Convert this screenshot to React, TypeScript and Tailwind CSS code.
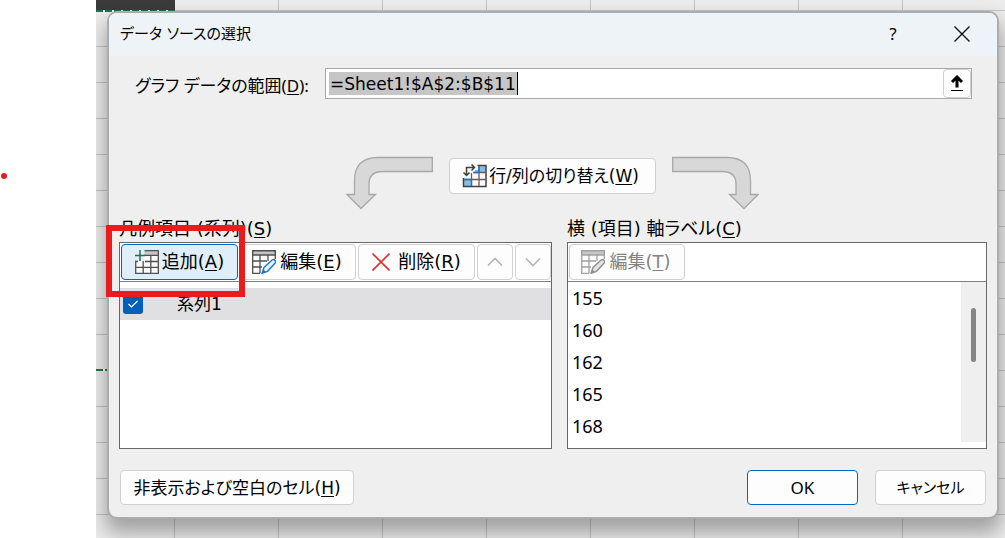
import type { ReactNode } from "react";

const button =
  "flex shrink-0 items-center justify-center rounded border border-[#d0d0d0] bg-[#fdfdfd] whitespace-nowrap";

function Key({ children }: { children: string }) {
  return (
    <>
      (<span className="underline decoration-1 underline-offset-2">{children}</span>)
    </>
  );
}

function TableIcon({ kind, muted = false }: { kind: "add" | "edit"; muted?: boolean }) {
  const line = muted ? "#a0a0a0" : "#505050";
  const head = muted ? "#c8c8c8" : "#c4c4c4";
  const pen = muted ? "#8f8f8f" : "#1e78c8";
  return (
    <svg width="24" height="24" viewBox="0 0 24 24" fill="none" className="shrink-0" aria-hidden="true">
      {kind === "add" ? (
        <>
          <path d="M.7 11H8.500V5.500H23.300V23.300H.7Z" fill="#fafafa" />
          <path d="M9.500 .7H23.300V5H9.500Z" fill={head} />
          <path
            d="M9.500 .7H23.300V23.300H.7V10.500M9.500 5.300H23.300M10 11.500H23.300M.7 11.500H3M.7 17.300H23.300M8.200 11V23.300M15.800 5.300V23.300"
            stroke={line}
            strokeWidth="1.300"
          />
          <path d="M5 0V11M0 5.500H10.500" stroke="#217346" strokeWidth="1.500" />
        </>
      ) : (
        <>
          <path d="M.7 .7H23.300V5H.7Z" fill={head} stroke={line} strokeWidth="1.400" />
          <path
            d="M.7 5V23.300H8M.7 11H15M.7 17H10M8 5V23.300M16 5V11M23.300 5V9"
            stroke={line}
            strokeWidth="1.300"
          />
          <path
            d="M10 23.300L12 17.500L20.300 9.800Q22 9 23.200 10.500Q24 12 23 13.200L15.500 21.300Z"
            fill={muted ? "#e4e4e4" : "#e3f1fc"}
            stroke={pen}
            strokeWidth="1.400"
          />
          <path d="M11.500 19.500L13.800 21.800L10 23.300Z" fill={pen} />
        </>
      )}
    </svg>
  );
}

function SwitchIcon() {
  return (
    <svg width="25" height="24" viewBox="0 0 25 24" fill="none" className="shrink-0" aria-hidden="true">
      <path d="M17 2H24V8.500H13V6H17Z" fill="#83beec" />
      <path d="M2 15H9V22H2Z" fill="#83beec" />
      <path d="M15.500 1.500H24V22.500H1.500V14" stroke="#404040" strokeWidth="1.500" />
      <path d="M11 8.500H24M2 15.500H24M9.500 9V22M17 2V22" stroke="#606060" strokeWidth="1.300" />
      <path d="M12 8.500H17V2M2 15.500H9.500V22" stroke="#1e78c8" strokeWidth="1.300" />
      <path
        d="M4.500 11V3.500H12.500M9.500 .5L12.500 3.500L9.500 6.500M1.500 8.500L4.500 11.500L7.500 8.500"
        stroke="#404040"
        strokeWidth="1.500"
      />
    </svg>
  );
}

function CurvedArrow({ flip = false }: { flip?: boolean }) {
  return (
    <svg width="87" height="54" viewBox="0 0 87 54" className="shrink-0" aria-hidden="true">
      <path
        transform={flip ? "matrix(-1 0 0 1 87 0)" : undefined}
        d="M86.300 1.500V15.500H37Q23 15.500 23 28V38.500H29.500L15 52.500L1 38.500H8.500V25Q8.500 1.500 32 1.500Z"
        fill="#d8d8d8"
        stroke="#a8a8a8"
        strokeWidth="1.300"
      />
    </svg>
  );
}

function Chevron({ down = false }: { down?: boolean }) {
  return (
    <svg width="16" height="10" viewBox="0 0 16 10" fill="none" stroke="#b4b4b4" strokeWidth="1.600" aria-hidden="true">
      <path d={down ? "M1 1.500L8 8.500L15 1.500" : "M1 8.500L8 1.500L15 8.500"} />
    </svg>
  );
}

function Panel({ children }: { children: ReactNode }) {
  return <div className="flex h-[207px] flex-col border border-[#686868] bg-white">{children}</div>;
}

const columns = [78, 182, 286, 390, 494, 598, 702, 806];
const rows = [10, 46, 82, 118, 154, 190, 226, 262, 298, 334, 370, 406, 442, 478, 514];

function Sheet() {
  return (
    <svg className="absolute inset-0 h-full w-full" aria-hidden="true">
      <g stroke="#c4c4c4" strokeWidth="1">
        {columns.map((x) => (
          <path key={x} d={`M${x + 0.5} 0V2000`} />
        ))}
        {rows.map((y) => (
          <path key={y} d={`M0 ${y + 0.5}H3000`} />
        ))}
      </g>
      <path d="M0 0H79V10H0Z" fill="#3b3b3b" />
      <path d="M0 11H79M0 370H14" stroke="#fff" strokeWidth="2" />
      <path d="M0 11H79M78 10V14M0 370H14" stroke="#217346" strokeWidth="2" strokeDasharray="7 2" />
    </svg>
  );
}

export default function App() {
  return (
    <div className="flex min-h-screen bg-white font-['DejaVu_Sans','Noto_Sans_CJK_JP',sans-serif] text-[17px] leading-6 text-black [font-feature-settings:'palt']">
      <div className="w-24 shrink-0 pt-[173px] pl-px">
        <div className="size-[6px] rounded-full bg-[#e81c1c]" />
      </div>
      <main className="relative min-w-0 flex-1 overflow-hidden bg-[#ececec] pt-[11px] pr-[6px] pb-[18px] pl-[11px]">
        <Sheet />
        <section
          role="dialog"
          aria-labelledby="title"
          className="relative rounded-[10px] border-2 border-[#acacac] bg-[#efefef] shadow-[0_12px_20px_2px_rgba(0,0,0,0.32)]"
        >
          <header className="flex h-[43px] items-center rounded-t-lg bg-[#eef3f8] pr-[26px] pb-[2px] pl-[11px]">
            <h1 id="title" className="flex-1 text-[15px]">
              データ ソースの選択
            </h1>
            <button aria-label="ヘルプ" className="w-6 font-['Noto_Sans']">
              ?
            </button>
            <button aria-label="閉じる" className="ml-12">
              <svg width="18" height="18" viewBox="0 0 18 18" stroke="#111" strokeWidth="1.400" aria-hidden="true">
                <path d="M1.500 1.500L16.500 16.500M16.500 1.500L1.500 16.500" />
              </svg>
            </button>
          </header>

          <div className="flex items-center pt-3 pr-[25px] pl-[26px]">
            <label
              htmlFor="range"
              className="w-[190px] shrink-0 pt-1 font-['Noto_Sans','Noto_Sans_CJK_JP',sans-serif] whitespace-nowrap"
            >
              グラフ データの範囲
              <Key>D</Key>:
            </label>
            <div className="relative flex h-[31px] min-w-0 flex-1 items-center border border-[#a8a8a8] bg-white pl-[3px]">
              <div className="pointer-events-none absolute flex h-[23px] items-center border-r border-black bg-[#c6c6c6] px-px">
                <span className="invisible">=Sheet1!$A$2:$B$11</span>
              </div>
              <input
                id="range"
                defaultValue="=Sheet1!$A$2:$B$11"
                className="relative min-w-0 flex-1 bg-transparent px-px leading-6 outline-none"
              />
              <button aria-label="範囲を選択" className={`${button} h-[29px] w-7`}>
                <svg width="14" height="18" viewBox="0 0 14 18" fill="none" stroke="#000" aria-hidden="true">
                  <path d="M7 12.500V2M2 7L7 2L12 7" strokeWidth="3" />
                  <path d="M1 15.500H13" />
                </svg>
              </button>
            </div>
          </div>

          <div className="mt-[57px] flex h-[57px] justify-center gap-4 pr-px">
            <CurvedArrow />
            <button className={`${button} mt-[2px] h-9 w-[207px] gap-[2px] pr-1`}>
              <SwitchIcon />
              <span>
                行/列の切り替え
                <Key>W</Key>
              </span>
            </button>
            <CurvedArrow flip />
          </div>

          <div className="grid grid-cols-[433fr_420fr] gap-x-[15px] pt-1 pr-[10px] pl-[10px] text-lg leading-6">
            <div className="relative min-w-0">
              <h2 className="mb-px">
                凡例項目 (系列)
                <Key>S</Key>
              </h2>
              <Panel>
                <div className="flex h-[39px] shrink-0 gap-[2px] border-b border-[#808080] p-px">
                  <button className="flex h-9 w-[117px] shrink-0 items-center justify-center gap-[3px] rounded border border-[#0067c0] bg-[#e0eef9] whitespace-nowrap">
                    <TableIcon kind="add" />
                    <span>
                      追加
                      <Key>A</Key>
                    </span>
                  </button>
                  <button className={`${button} h-9 w-[116px] gap-1 pr-[2px]`}>
                    <TableIcon kind="edit" />
                    <span>
                      編集
                      <Key>E</Key>
                    </span>
                  </button>
                  <button className={`${button} h-9 w-[117px] gap-2`}>
                    <svg width="18" height="18" viewBox="0 0 18 18" stroke="#e03030" strokeWidth="1.600" aria-hidden="true">
                      <path d="M.5 .5L17.500 17.500M17.500 .5L.5 17.500" />
                    </svg>
                    <span>
                      削除
                      <Key>R</Key>
                    </span>
                  </button>
                  <button disabled aria-label="上へ移動" className={`${button} h-9 w-9`}>
                    <Chevron />
                  </button>
                  <button disabled aria-label="下へ移動" className={`${button} h-9 w-9`}>
                    <Chevron down />
                  </button>
                </div>
                <label className="mt-[6px] flex h-8 items-center gap-[34px] bg-[#e0e0e2] pl-[3px] text-[17px]">
                  <input
                    type="checkbox"
                    defaultChecked
                    className="peer size-5 appearance-none rounded-[3px] bg-[#005fb8]"
                  />
                  <svg
                    className="pointer-events-none absolute ml-[5px] hidden peer-checked:block"
                    width="10"
                    height="8"
                    viewBox="0 0 10 8"
                    fill="none"
                    stroke="#fff"
                    strokeWidth="1.200"
                    aria-hidden="true"
                  >
                    <path d="M.5 4L3.500 7L9.500 1" />
                  </svg>
                  <span>系列1</span>
                </label>
              </Panel>
              <div className="pointer-events-none absolute top-2 -left-[13px] h-[72px] w-[139px] border-[6px] border-[#e81c1c]" />
            </div>

            <div className="min-w-0">
              <h2 className="mb-px">
                横 (項目) 軸ラベル
                <Key>C</Key>
              </h2>
              <Panel>
                <div className="flex h-[39px] shrink-0 border-b border-[#808080] p-px">
                  <button disabled className={`${button} h-9 w-[116px] gap-1 pr-[2px] text-[#838383]`}>
                    <TableIcon kind="edit" muted />
                    <span>
                      編集
                      <Key>T</Key>
                    </span>
                  </button>
                </div>
                <div className="flex h-40">
                  <ul className="flex-1 pl-1 font-['Noto_Sans'] text-lg leading-8">
                    <li>155</li>
                    <li>160</li>
                    <li>162</li>
                    <li>165</li>
                    <li>168</li>
                  </ul>
                  <div className="w-[25px] bg-[#efefef] pt-[26px] pl-[10px]">
                    <div className="h-[54px] w-[5px] rounded-full bg-[#858585]" />
                  </div>
                </div>
              </Panel>
            </div>
          </div>

          <footer className="flex gap-[17px] pt-[21px] pr-[11px] pb-[12px] pl-[11px]">
            <button className={`${button} h-[35px] w-[234px]`}>
              <span>
                非表示および空白のセル
                <Key>H</Key>
              </span>
            </button>
            <button className="ml-auto h-[35px] w-[111px] rounded border border-[#0067c0] bg-[#fdfdfd] font-['Noto_Sans']">
              OK
            </button>
            <button className={`${button} h-[35px] w-[111px] text-[15px]`}>キャンセル</button>
          </footer>
        </section>
      </main>
    </div>
  );
}
